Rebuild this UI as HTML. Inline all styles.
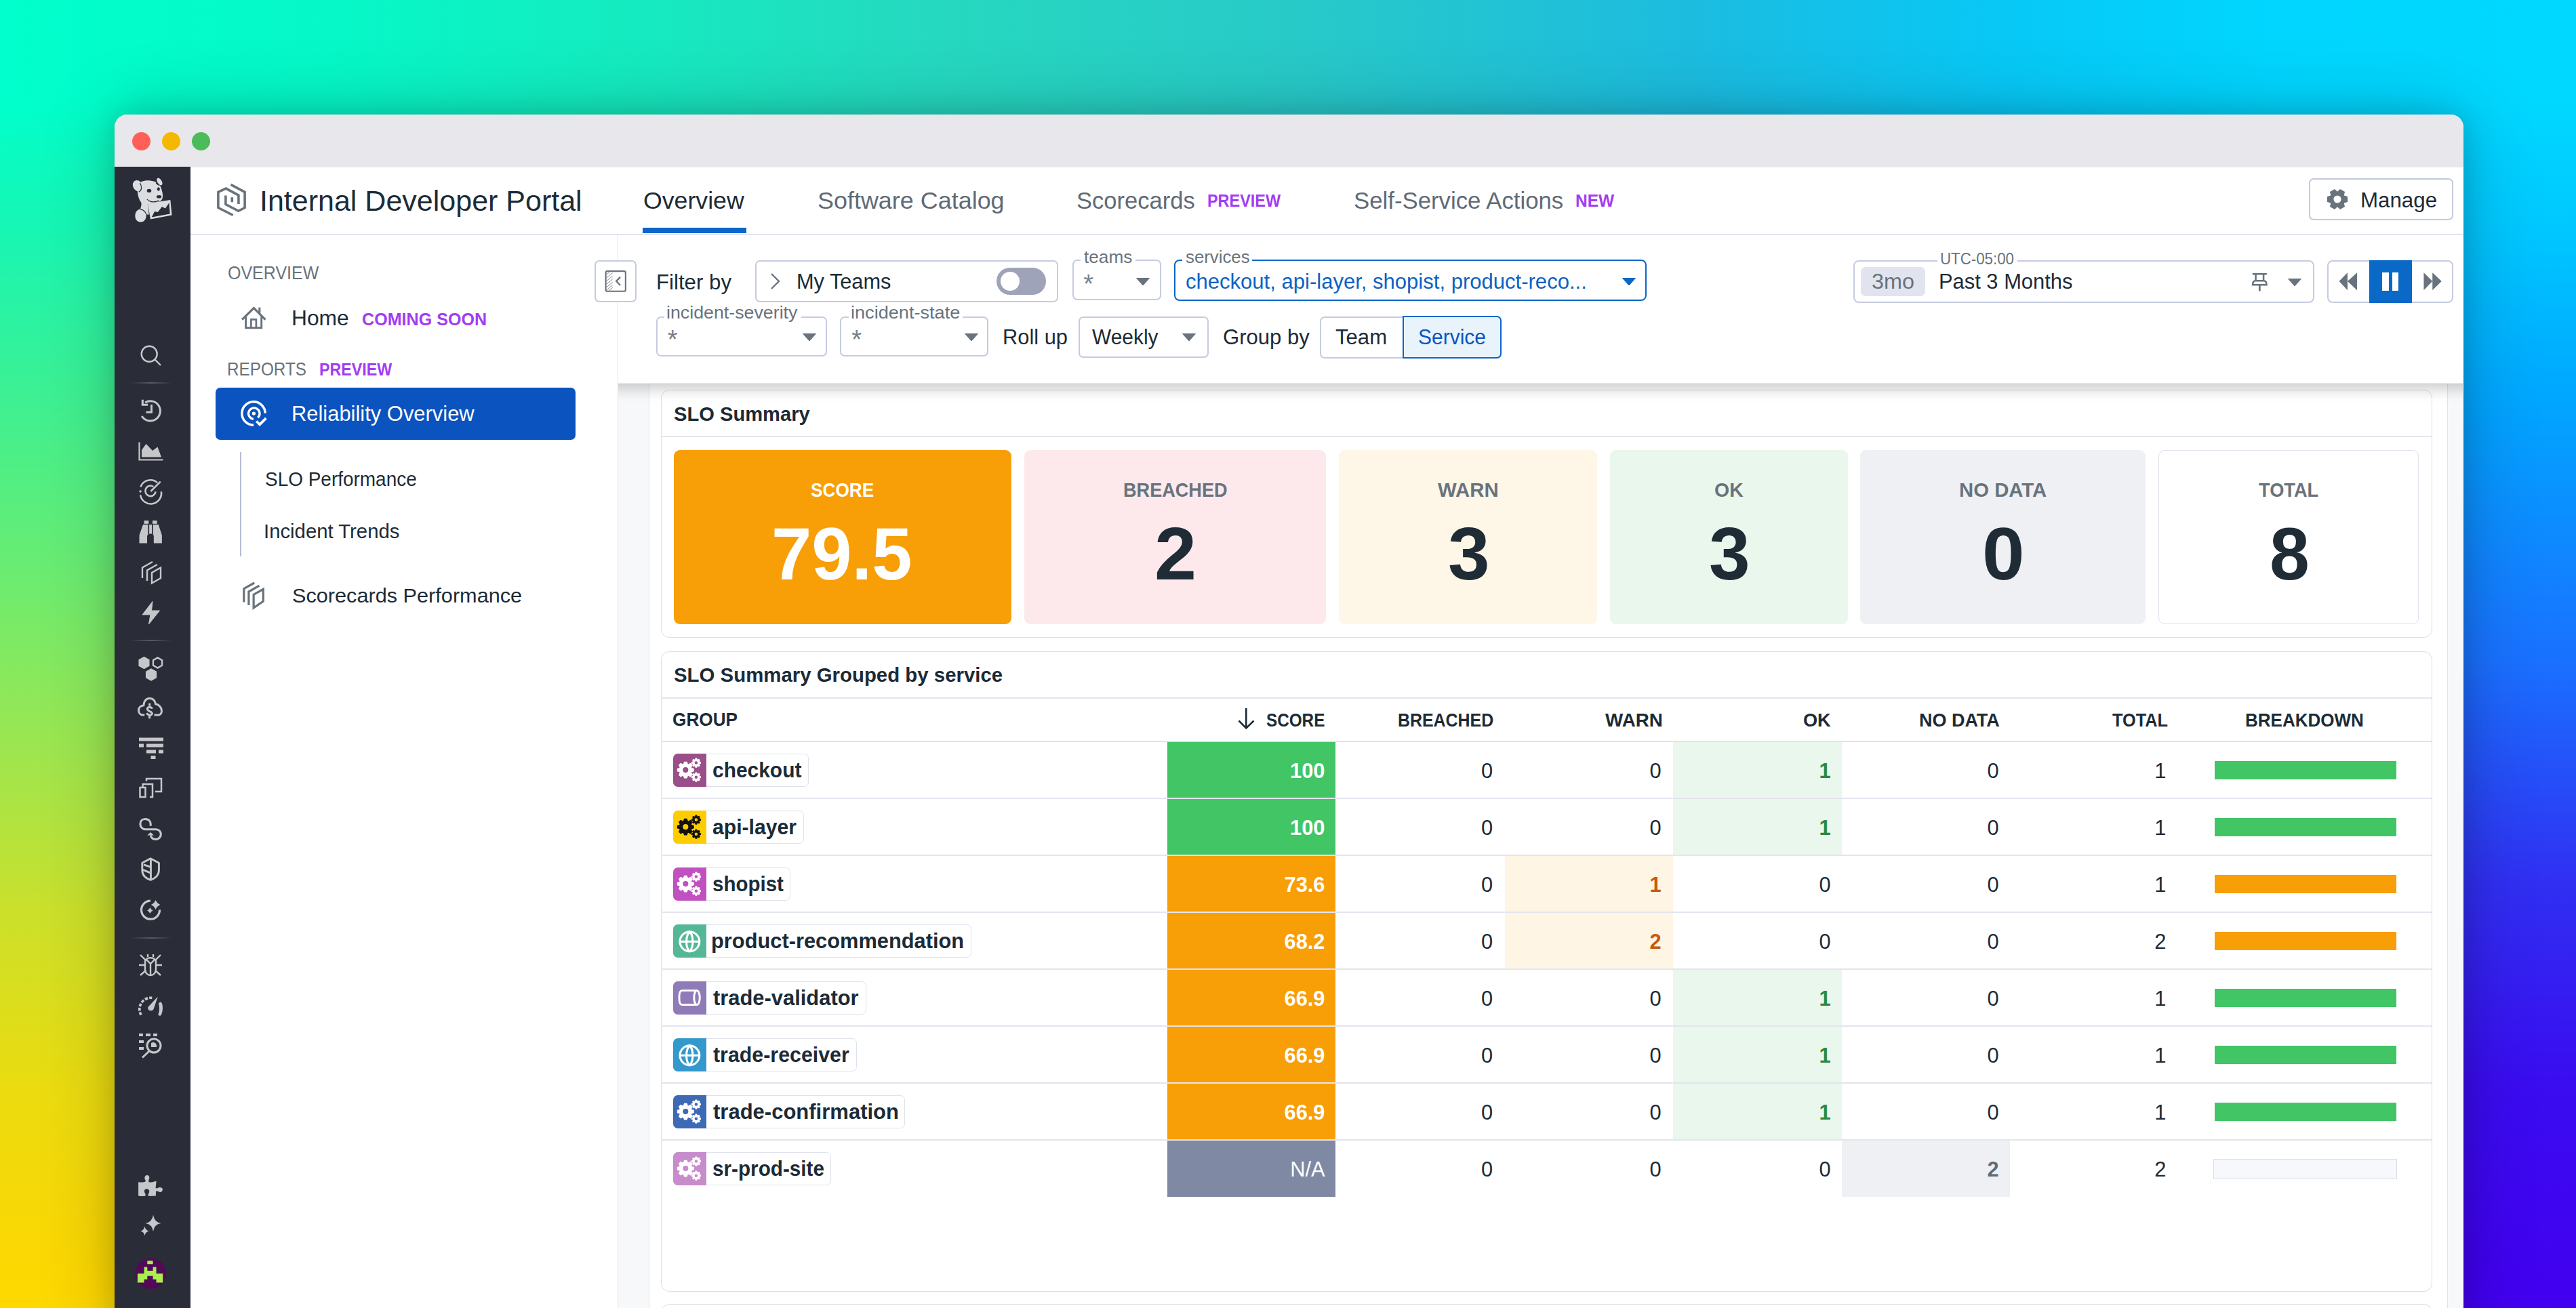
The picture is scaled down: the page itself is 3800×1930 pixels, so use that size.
<!DOCTYPE html>
<html><head><meta charset="utf-8"><style>
html,body{margin:0;padding:0;width:3800px;height:1930px;overflow:hidden;position:relative}
body{background:linear-gradient(90deg,#00ffcc 0px,#06f8c8 500px,#14ecc0 900px,#26d8c0 1400px,#28cac8 1900px,#1cbce0 2500px,#08c8f6 2950px,#00d6ff 3350px,#00d8ff 3800px);font-family:"Liberation Sans",sans-serif}
.b{position:absolute}
.t{position:absolute;white-space:pre;line-height:1;transform-origin:0 0;z-index:5}
.tr{position:absolute;white-space:pre;line-height:1;z-index:5}
</style></head><body>
<div class="b" style="left:0;top:0;width:175px;height:1930px;background:linear-gradient(180deg,rgba(6,250,196,0) 150px,#16f6b4 330px,#40f090 600px,#6cec70 850px,#9ce650 1100px,#cce02a 1350px,#eadc10 1600px,#f8d806 1800px,#ffd800 1930px)"></div>
<div class="b" style="left:3625px;top:0;width:175px;height:1930px;background:linear-gradient(180deg,rgba(0,216,255,0) 150px,#00c8ff 330px,#00a8ff 574px,#1a70ff 978px,#3030f2 1300px,#3a0cf0 1600px,#4200f0 1930px)"></div>
<div class="b" style="left:168.5px;top:168.5px;width:3465px;height:1800px;border-radius:19px 19px 0 0;background:#fff;box-shadow:0 0 110px rgba(0,0,0,0.22),0 0 40px rgba(0,0,0,0.14);overflow:hidden"><div class="b" style="left:0;top:0;width:3465px;height:78px;background:#e8e8ec"></div></div>
<div class="b" style="left:194.5px;top:194.5px;width:27px;height:27px;border-radius:50%;background:#ff5f57"></div>
<div class="b" style="left:238.5px;top:194.5px;width:27px;height:27px;border-radius:50%;background:#f5b800"></div>
<div class="b" style="left:282.5px;top:194.5px;width:27px;height:27px;border-radius:50%;background:#4cbb5a"></div>
<div class="b" style="left:168.5px;top:246px;width:112.5px;height:1684px;background:#2a2d38"></div>
<div class="b" style="left:192px;top:564.4px;width:62px;height:1.7999999999999545px;background:linear-gradient(90deg,rgba(90,92,98,0),rgba(95,96,100,0.9),rgba(90,92,98,0))"></div>
<div class="b" style="left:192px;top:943.9px;width:62px;height:1.7999999999999545px;background:linear-gradient(90deg,rgba(90,92,98,0),rgba(95,96,100,0.9),rgba(90,92,98,0))"></div>
<div class="b" style="left:192px;top:1382.8px;width:62px;height:1.800000000000182px;background:linear-gradient(90deg,rgba(90,92,98,0),rgba(95,96,100,0.9),rgba(90,92,98,0))"></div>
<div class="b" style="left:281px;top:345px;width:3352px;height:2px;background:#e1e4ee"></div>
<div class="b" style="left:910.5px;top:346px;width:1.2999999999999545px;height:1584px;background:#e1e4ee"></div>
<div class="b" style="left:911.8px;top:566px;width:2722.2px;height:1364px;background:#f7f8fa"></div>
<div class="b" style="left:957px;top:566px;width:2654px;height:1364px;background:#fff;border-left:1.4px solid #e2e3e6;border-right:1.4px solid #e2e3e6;box-sizing:border-box"></div>
<div class="b" style="left:911.8px;top:347px;width:2721.2px;height:218px;background:#fff;z-index:2"></div>
<div class="b" style="left:911.8px;top:565px;width:2721.2px;height:2px;background:#dfe3ee;z-index:7"></div>
<div class="b" style="left:911.8px;top:567px;width:2721.2px;height:27px;background:linear-gradient(180deg,rgba(0,0,0,0.16),rgba(0,0,0,0.10) 25%,rgba(0,0,0,0.045) 55%,rgba(0,0,0,0.012) 80%,rgba(0,0,0,0));z-index:7"></div>
<div class="b" style="left:317.5px;top:571.75px;width:531.25px;height:76.75px;background:#0b53bf;border-radius:7px"></div>
<div class="b" style="left:354.3px;top:667px;width:2.0px;height:154px;background:#b7bdd3"></div>
<div class="b" style="left:948px;top:335.5px;width:152.5px;height:8.5px;background:#0a66c8"></div>
<div class="b" style="left:3406px;top:263.3px;width:212.5px;height:62.19999999999999px;border:2px solid #c3c9de;border-radius:7px;box-sizing:border-box"></div>
<div class="b" style="left:876.75px;top:384.25px;width:62.0px;height:61.75px;border:2.1px solid #c6cbe0;border-radius:7px;box-sizing:border-box;background:#fff;z-index:3"></div>
<div class="b" style="left:1113.75px;top:384.25px;width:447.5px;height:61.75px;border:2.1px solid #c6cbe0;border-radius:7px;box-sizing:border-box;z-index:3"></div>
<div class="b" style="left:1470px;top:394.75px;width:72.5px;height:40.5px;background:#9ea3b9;border-radius:21px;z-index:3"></div>
<div class="b" style="left:1476px;top:401px;width:28px;height:28px;background:#fff;border-radius:50%;z-index:3"></div>
<div class="b" style="left:1581.5px;top:382.7px;width:131.0px;height:60.80000000000001px;border:2.1px solid #c6cbe0;border-radius:7px;box-sizing:border-box;z-index:3"></div>
<div class="b" style="left:1594px;top:378px;width:81px;height:14px;background:#fff;z-index:3"></div>
<div class="b" style="left:1732px;top:382.7px;width:696.75px;height:61.30000000000001px;border:2.4px solid #0b66c8;border-radius:8px;box-sizing:border-box;z-index:3"></div>
<div class="b" style="left:1744px;top:378px;width:103px;height:14px;background:#fff;z-index:3"></div>
<div class="b" style="left:967.5px;top:466.5px;width:252.0px;height:59.0px;border:2.1px solid #c6cbe0;border-radius:7px;box-sizing:border-box;z-index:3"></div>
<div class="b" style="left:980px;top:460px;width:202px;height:14px;background:#fff;z-index:3"></div>
<div class="b" style="left:1239.25px;top:466.5px;width:218.75px;height:59.0px;border:2.1px solid #c6cbe0;border-radius:7px;box-sizing:border-box;z-index:3"></div>
<div class="b" style="left:1252px;top:460px;width:168px;height:14px;background:#fff;z-index:3"></div>
<div class="b" style="left:1590.5px;top:466.5px;width:192.0px;height:61.5px;border:2.1px solid #c6cbe0;border-radius:7px;box-sizing:border-box;z-index:3"></div>
<div class="b" style="left:1946.75px;top:466.5px;width:268.25px;height:62.0px;border:2.1px solid #c6cbe0;border-radius:7px;box-sizing:border-box;z-index:3"></div>
<div class="b" style="left:2068.75px;top:466px;width:146.25px;height:62.5px;border:2px solid #0b66c8;border-radius:0 7px 7px 0;box-sizing:border-box;background:#e9f3fc;z-index:3"></div>
<div class="b" style="left:2734.25px;top:384.25px;width:679.5px;height:62.25px;border:2.1px solid #c6cbe0;border-radius:8px;box-sizing:border-box;z-index:3"></div>
<div class="b" style="left:2857.5px;top:376px;width:118.5px;height:16px;background:#fff;z-index:3"></div>
<div class="b" style="left:2745px;top:393.5px;width:95px;height:43.0px;background:#e1e4ef;border-radius:7px;z-index:3"></div>
<div class="b" style="left:3433.2px;top:383.8px;width:185.4000000000001px;height:62.80000000000001px;border:2.1px solid #c6cbe0;border-radius:8px;box-sizing:border-box;z-index:3"></div>
<div class="b" style="left:3494.5px;top:383.8px;width:63.40000000000009px;height:62.80000000000001px;background:#0a68c6;z-index:3"></div>
<div class="b" style="left:3514px;top:401.8px;width:9.5px;height:27.399999999999977px;background:#fff;z-index:3"></div>
<div class="b" style="left:3529px;top:401.8px;width:9.300000000000182px;height:27.399999999999977px;background:#fff;z-index:3"></div>
<div class="b" style="left:975px;top:574.8px;width:2612.5px;height:366.20000000000005px;border:1.6px solid #dcdde2;border-radius:12.5px;box-sizing:border-box;background:#fff"></div>
<div class="b" style="left:976.5px;top:643px;width:2610.0px;height:2px;background:#e3e5ee"></div>
<div class="b" style="left:994.25px;top:663.6px;width:498.0999999999999px;height:257.9px;background:#f89e07;border-radius:9px;"></div>
<div class="b" style="left:1511px;top:663.6px;width:445.4000000000001px;height:257.9px;background:#fde9ec;border-radius:9px;"></div>
<div class="b" style="left:1975px;top:663.6px;width:381.4000000000001px;height:257.9px;background:#fef6e6;border-radius:9px;"></div>
<div class="b" style="left:2374.7px;top:663.6px;width:351.0px;height:257.9px;background:#eaf7ec;border-radius:9px;"></div>
<div class="b" style="left:2744.4px;top:663.6px;width:420.2999999999997px;height:257.9px;background:#eff0f4;border-radius:9px;"></div>
<div class="b" style="left:3183.6px;top:663.6px;width:384.9000000000001px;height:257.9px;background:#fff;border-radius:9px;border:1.6px solid #dfe2ec;box-sizing:border-box;"></div>
<div class="b" style="left:975px;top:960.5px;width:2612.5px;height:945.8px;border:1.6px solid #dcdde2;border-radius:12.5px;box-sizing:border-box;background:#fff"></div>
<div class="b" style="left:976.5px;top:1029px;width:2610.0px;height:2px;background:#e3e5ee"></div>
<div class="b" style="left:976.5px;top:1092.8px;width:2610.0px;height:2.2000000000000455px;background:#dfe2ec"></div>
<div class="b" style="left:975px;top:1924.3px;width:2612.5px;height:75.70000000000005px;border:1.6px solid #dcdde2;border-radius:12.5px;box-sizing:border-box;background:#fff"></div>
<div class="b" style="left:1721.5px;top:1095px;width:248.75px;height:83px;background:#42c565"></div>
<div class="b" style="left:2468px;top:1095px;width:248.75px;height:83px;background:#e9f7ec"></div>
<div class="b" style="left:3266.5px;top:1123px;width:268.0px;height:27px;background:#42c565"></div>
<div class="b" style="left:976.5px;top:1177px;width:2610.0px;height:2px;background:#e3e5ee"></div>
<div class="b" style="left:992.5px;top:1111.5px;width:200.5px;height:49.0px;border:1.5px solid #dfe2ec;border-radius:7px;box-sizing:border-box;background:#fff"></div>
<div class="b" style="left:992.5px;top:1111.5px;width:49.5px;height:49.0px;background:#9b4f8a;border-radius:7px 0 0 7px"></div>
<svg class="b" style="left:992.5px;top:1111.5px;z-index:6" width="49.5" height="49" viewBox="0 0 49.2 49.6"><path fill-rule="evenodd" fill="#fff" d="M27.04,20.90 L30.71,22.20 L30.71,26.60 L27.04,27.90 L26.90,28.25 L28.57,31.76 L25.46,34.87 L21.95,33.20 L21.60,33.34 L20.30,37.01 L15.90,37.01 L14.60,33.34 L14.25,33.20 L10.74,34.87 L7.63,31.76 L9.30,28.25 L9.16,27.90 L5.49,26.60 L5.49,22.20 L9.16,20.90 L9.30,20.55 L7.63,17.04 L10.74,13.93 L14.25,15.60 L14.60,15.46 L15.90,11.79 L20.30,11.79 L21.60,15.46 L21.95,15.60 L25.46,13.93 L28.57,17.04 L26.90,20.55 Z M22.20,24.40 A4.1,4.1 0 1 0 14.00,24.40 A4.1,4.1 0 1 0 22.20,24.40 Z M38.93,11.73 L41.09,12.44 L41.09,14.96 L38.93,15.67 L38.85,15.86 L39.87,17.90 L38.10,19.67 L36.06,18.65 L35.87,18.73 L35.16,20.89 L32.64,20.89 L31.93,18.73 L31.74,18.65 L29.70,19.67 L27.93,17.90 L28.95,15.86 L28.87,15.67 L26.71,14.96 L26.71,12.44 L28.87,11.73 L28.95,11.54 L27.93,9.50 L29.70,7.73 L31.74,8.75 L31.93,8.67 L32.64,6.51 L35.16,6.51 L35.87,8.67 L36.06,8.75 L38.10,7.73 L39.87,9.50 L38.85,11.54 Z M36.20,13.70 A2.3,2.3 0 1 0 31.60,13.70 A2.3,2.3 0 1 0 36.20,13.70 Z M38.93,33.13 L41.09,33.84 L41.09,36.36 L38.93,37.07 L38.85,37.26 L39.87,39.30 L38.10,41.07 L36.06,40.05 L35.87,40.13 L35.16,42.29 L32.64,42.29 L31.93,40.13 L31.74,40.05 L29.70,41.07 L27.93,39.30 L28.95,37.26 L28.87,37.07 L26.71,36.36 L26.71,33.84 L28.87,33.13 L28.95,32.94 L27.93,30.90 L29.70,29.13 L31.74,30.15 L31.93,30.07 L32.64,27.91 L35.16,27.91 L35.87,30.07 L36.06,30.15 L38.10,29.13 L39.87,30.90 L38.85,32.94 Z M36.20,35.10 A2.3,2.3 0 1 0 31.60,35.10 A2.3,2.3 0 1 0 36.20,35.10 Z"/></svg>
<div class="b" style="left:1721.5px;top:1179px;width:248.75px;height:83px;background:#42c565"></div>
<div class="b" style="left:2468px;top:1179px;width:248.75px;height:83px;background:#e9f7ec"></div>
<div class="b" style="left:3266.5px;top:1207px;width:268.0px;height:27px;background:#42c565"></div>
<div class="b" style="left:976.5px;top:1261px;width:2610.0px;height:2px;background:#e3e5ee"></div>
<div class="b" style="left:992.5px;top:1195.5px;width:193.5px;height:49.0px;border:1.5px solid #dfe2ec;border-radius:7px;box-sizing:border-box;background:#fff"></div>
<div class="b" style="left:992.5px;top:1195.5px;width:49.5px;height:49.0px;background:#ffcc00;border-radius:7px 0 0 7px"></div>
<svg class="b" style="left:992.5px;top:1195.5px;z-index:6" width="49.5" height="49" viewBox="0 0 49.2 49.6"><path fill-rule="evenodd" fill="#111" d="M27.04,20.90 L30.71,22.20 L30.71,26.60 L27.04,27.90 L26.90,28.25 L28.57,31.76 L25.46,34.87 L21.95,33.20 L21.60,33.34 L20.30,37.01 L15.90,37.01 L14.60,33.34 L14.25,33.20 L10.74,34.87 L7.63,31.76 L9.30,28.25 L9.16,27.90 L5.49,26.60 L5.49,22.20 L9.16,20.90 L9.30,20.55 L7.63,17.04 L10.74,13.93 L14.25,15.60 L14.60,15.46 L15.90,11.79 L20.30,11.79 L21.60,15.46 L21.95,15.60 L25.46,13.93 L28.57,17.04 L26.90,20.55 Z M22.20,24.40 A4.1,4.1 0 1 0 14.00,24.40 A4.1,4.1 0 1 0 22.20,24.40 Z M38.93,11.73 L41.09,12.44 L41.09,14.96 L38.93,15.67 L38.85,15.86 L39.87,17.90 L38.10,19.67 L36.06,18.65 L35.87,18.73 L35.16,20.89 L32.64,20.89 L31.93,18.73 L31.74,18.65 L29.70,19.67 L27.93,17.90 L28.95,15.86 L28.87,15.67 L26.71,14.96 L26.71,12.44 L28.87,11.73 L28.95,11.54 L27.93,9.50 L29.70,7.73 L31.74,8.75 L31.93,8.67 L32.64,6.51 L35.16,6.51 L35.87,8.67 L36.06,8.75 L38.10,7.73 L39.87,9.50 L38.85,11.54 Z M36.20,13.70 A2.3,2.3 0 1 0 31.60,13.70 A2.3,2.3 0 1 0 36.20,13.70 Z M38.93,33.13 L41.09,33.84 L41.09,36.36 L38.93,37.07 L38.85,37.26 L39.87,39.30 L38.10,41.07 L36.06,40.05 L35.87,40.13 L35.16,42.29 L32.64,42.29 L31.93,40.13 L31.74,40.05 L29.70,41.07 L27.93,39.30 L28.95,37.26 L28.87,37.07 L26.71,36.36 L26.71,33.84 L28.87,33.13 L28.95,32.94 L27.93,30.90 L29.70,29.13 L31.74,30.15 L31.93,30.07 L32.64,27.91 L35.16,27.91 L35.87,30.07 L36.06,30.15 L38.10,29.13 L39.87,30.90 L38.85,32.94 Z M36.20,35.10 A2.3,2.3 0 1 0 31.60,35.10 A2.3,2.3 0 1 0 36.20,35.10 Z"/></svg>
<div class="b" style="left:1721.5px;top:1263px;width:248.75px;height:83px;background:#f89e07"></div>
<div class="b" style="left:2219.5px;top:1263px;width:248.5px;height:83px;background:#fef5e4"></div>
<div class="b" style="left:3266.5px;top:1291px;width:268.0px;height:27px;background:#f89e07"></div>
<div class="b" style="left:976.5px;top:1345px;width:2610.0px;height:2px;background:#e3e5ee"></div>
<div class="b" style="left:992.5px;top:1279.5px;width:173.0px;height:49.0px;border:1.5px solid #dfe2ec;border-radius:7px;box-sizing:border-box;background:#fff"></div>
<div class="b" style="left:992.5px;top:1279.5px;width:49.5px;height:49.0px;background:#c150c0;border-radius:7px 0 0 7px"></div>
<svg class="b" style="left:992.5px;top:1279.5px;z-index:6" width="49.5" height="49" viewBox="0 0 49.2 49.6"><path fill-rule="evenodd" fill="#fff" d="M27.04,20.90 L30.71,22.20 L30.71,26.60 L27.04,27.90 L26.90,28.25 L28.57,31.76 L25.46,34.87 L21.95,33.20 L21.60,33.34 L20.30,37.01 L15.90,37.01 L14.60,33.34 L14.25,33.20 L10.74,34.87 L7.63,31.76 L9.30,28.25 L9.16,27.90 L5.49,26.60 L5.49,22.20 L9.16,20.90 L9.30,20.55 L7.63,17.04 L10.74,13.93 L14.25,15.60 L14.60,15.46 L15.90,11.79 L20.30,11.79 L21.60,15.46 L21.95,15.60 L25.46,13.93 L28.57,17.04 L26.90,20.55 Z M22.20,24.40 A4.1,4.1 0 1 0 14.00,24.40 A4.1,4.1 0 1 0 22.20,24.40 Z M38.93,11.73 L41.09,12.44 L41.09,14.96 L38.93,15.67 L38.85,15.86 L39.87,17.90 L38.10,19.67 L36.06,18.65 L35.87,18.73 L35.16,20.89 L32.64,20.89 L31.93,18.73 L31.74,18.65 L29.70,19.67 L27.93,17.90 L28.95,15.86 L28.87,15.67 L26.71,14.96 L26.71,12.44 L28.87,11.73 L28.95,11.54 L27.93,9.50 L29.70,7.73 L31.74,8.75 L31.93,8.67 L32.64,6.51 L35.16,6.51 L35.87,8.67 L36.06,8.75 L38.10,7.73 L39.87,9.50 L38.85,11.54 Z M36.20,13.70 A2.3,2.3 0 1 0 31.60,13.70 A2.3,2.3 0 1 0 36.20,13.70 Z M38.93,33.13 L41.09,33.84 L41.09,36.36 L38.93,37.07 L38.85,37.26 L39.87,39.30 L38.10,41.07 L36.06,40.05 L35.87,40.13 L35.16,42.29 L32.64,42.29 L31.93,40.13 L31.74,40.05 L29.70,41.07 L27.93,39.30 L28.95,37.26 L28.87,37.07 L26.71,36.36 L26.71,33.84 L28.87,33.13 L28.95,32.94 L27.93,30.90 L29.70,29.13 L31.74,30.15 L31.93,30.07 L32.64,27.91 L35.16,27.91 L35.87,30.07 L36.06,30.15 L38.10,29.13 L39.87,30.90 L38.85,32.94 Z M36.20,35.10 A2.3,2.3 0 1 0 31.60,35.10 A2.3,2.3 0 1 0 36.20,35.10 Z"/></svg>
<div class="b" style="left:1721.5px;top:1347px;width:248.75px;height:83px;background:#f89e07"></div>
<div class="b" style="left:2219.5px;top:1347px;width:248.5px;height:83px;background:#fef5e4"></div>
<div class="b" style="left:3266.5px;top:1375px;width:268.0px;height:27px;background:#f89e07"></div>
<div class="b" style="left:976.5px;top:1429px;width:2610.0px;height:2px;background:#e3e5ee"></div>
<div class="b" style="left:992.5px;top:1363.5px;width:440.0px;height:49.0px;border:1.5px solid #dfe2ec;border-radius:7px;box-sizing:border-box;background:#fff"></div>
<div class="b" style="left:992.5px;top:1363.5px;width:49.5px;height:49.0px;background:#56b796;border-radius:7px 0 0 7px"></div>
<svg class="b" style="left:992.5px;top:1363.5px;z-index:6" width="49.5" height="49" viewBox="0 0 49.2 49.6"><g fill="none" stroke="#fff" stroke-width="3.1"><circle cx="24.2" cy="25.6" r="14.6"/><path d="M9.6,25.6 L38.8,25.6"/><path d="M24.2,11 C18,17 17.5,34 24.2,40.2 C30.4,34 30.4,17 24.2,11 Z"/></g></svg>
<div class="b" style="left:1721.5px;top:1431px;width:248.75px;height:83px;background:#f89e07"></div>
<div class="b" style="left:2468px;top:1431px;width:248.75px;height:83px;background:#e9f7ec"></div>
<div class="b" style="left:3266.5px;top:1459px;width:268.0px;height:27px;background:#42c565"></div>
<div class="b" style="left:976.5px;top:1513px;width:2610.0px;height:2px;background:#e3e5ee"></div>
<div class="b" style="left:992.5px;top:1447.5px;width:285.0px;height:49.0px;border:1.5px solid #dfe2ec;border-radius:7px;box-sizing:border-box;background:#fff"></div>
<div class="b" style="left:992.5px;top:1447.5px;width:49.5px;height:49.0px;background:#8f7bb8;border-radius:7px 0 0 7px"></div>
<svg class="b" style="left:992.5px;top:1447.5px;z-index:6" width="49.5" height="49" viewBox="0 0 49.2 49.6"><g fill="none" stroke="#fff" stroke-width="3"><path d="M35,13.8 L12.5,13.8 C9.5,13.8 8.6,19 8.6,24.5 C8.6,30 9.5,35 12.5,35 L35,35"/><ellipse cx="35" cy="24.4" rx="4.3" ry="10.6"/></g></svg>
<div class="b" style="left:1721.5px;top:1515px;width:248.75px;height:83px;background:#f89e07"></div>
<div class="b" style="left:2468px;top:1515px;width:248.75px;height:83px;background:#e9f7ec"></div>
<div class="b" style="left:3266.5px;top:1543px;width:268.0px;height:27px;background:#42c565"></div>
<div class="b" style="left:976.5px;top:1597px;width:2610.0px;height:2px;background:#e3e5ee"></div>
<div class="b" style="left:992.5px;top:1531.5px;width:271.25px;height:49.0px;border:1.5px solid #dfe2ec;border-radius:7px;box-sizing:border-box;background:#fff"></div>
<div class="b" style="left:992.5px;top:1531.5px;width:49.5px;height:49.0px;background:#3399cc;border-radius:7px 0 0 7px"></div>
<svg class="b" style="left:992.5px;top:1531.5px;z-index:6" width="49.5" height="49" viewBox="0 0 49.2 49.6"><g fill="none" stroke="#fff" stroke-width="3.1"><circle cx="24.2" cy="25.6" r="14.6"/><path d="M9.6,25.6 L38.8,25.6"/><path d="M24.2,11 C18,17 17.5,34 24.2,40.2 C30.4,34 30.4,17 24.2,11 Z"/></g></svg>
<div class="b" style="left:1721.5px;top:1599px;width:248.75px;height:83px;background:#f89e07"></div>
<div class="b" style="left:2468px;top:1599px;width:248.75px;height:83px;background:#e9f7ec"></div>
<div class="b" style="left:3266.5px;top:1627px;width:268.0px;height:27px;background:#42c565"></div>
<div class="b" style="left:976.5px;top:1681px;width:2610.0px;height:2px;background:#e3e5ee"></div>
<div class="b" style="left:992.5px;top:1615.5px;width:342.5px;height:49.0px;border:1.5px solid #dfe2ec;border-radius:7px;box-sizing:border-box;background:#fff"></div>
<div class="b" style="left:992.5px;top:1615.5px;width:49.5px;height:49.0px;background:#3d69b5;border-radius:7px 0 0 7px"></div>
<svg class="b" style="left:992.5px;top:1615.5px;z-index:6" width="49.5" height="49" viewBox="0 0 49.2 49.6"><path fill-rule="evenodd" fill="#fff" d="M27.04,20.90 L30.71,22.20 L30.71,26.60 L27.04,27.90 L26.90,28.25 L28.57,31.76 L25.46,34.87 L21.95,33.20 L21.60,33.34 L20.30,37.01 L15.90,37.01 L14.60,33.34 L14.25,33.20 L10.74,34.87 L7.63,31.76 L9.30,28.25 L9.16,27.90 L5.49,26.60 L5.49,22.20 L9.16,20.90 L9.30,20.55 L7.63,17.04 L10.74,13.93 L14.25,15.60 L14.60,15.46 L15.90,11.79 L20.30,11.79 L21.60,15.46 L21.95,15.60 L25.46,13.93 L28.57,17.04 L26.90,20.55 Z M22.20,24.40 A4.1,4.1 0 1 0 14.00,24.40 A4.1,4.1 0 1 0 22.20,24.40 Z M38.93,11.73 L41.09,12.44 L41.09,14.96 L38.93,15.67 L38.85,15.86 L39.87,17.90 L38.10,19.67 L36.06,18.65 L35.87,18.73 L35.16,20.89 L32.64,20.89 L31.93,18.73 L31.74,18.65 L29.70,19.67 L27.93,17.90 L28.95,15.86 L28.87,15.67 L26.71,14.96 L26.71,12.44 L28.87,11.73 L28.95,11.54 L27.93,9.50 L29.70,7.73 L31.74,8.75 L31.93,8.67 L32.64,6.51 L35.16,6.51 L35.87,8.67 L36.06,8.75 L38.10,7.73 L39.87,9.50 L38.85,11.54 Z M36.20,13.70 A2.3,2.3 0 1 0 31.60,13.70 A2.3,2.3 0 1 0 36.20,13.70 Z M38.93,33.13 L41.09,33.84 L41.09,36.36 L38.93,37.07 L38.85,37.26 L39.87,39.30 L38.10,41.07 L36.06,40.05 L35.87,40.13 L35.16,42.29 L32.64,42.29 L31.93,40.13 L31.74,40.05 L29.70,41.07 L27.93,39.30 L28.95,37.26 L28.87,37.07 L26.71,36.36 L26.71,33.84 L28.87,33.13 L28.95,32.94 L27.93,30.90 L29.70,29.13 L31.74,30.15 L31.93,30.07 L32.64,27.91 L35.16,27.91 L35.87,30.07 L36.06,30.15 L38.10,29.13 L39.87,30.90 L38.85,32.94 Z M36.20,35.10 A2.3,2.3 0 1 0 31.60,35.10 A2.3,2.3 0 1 0 36.20,35.10 Z"/></svg>
<div class="b" style="left:1721.5px;top:1683px;width:248.75px;height:83px;background:#8089a4"></div>
<div class="b" style="left:2717px;top:1683px;width:247.5px;height:83px;background:#eff0f4"></div>
<div class="b" style="left:3265px;top:1710px;width:271px;height:30px;background:#f7f8fc;border:1.5px solid #d8dbe8;box-sizing:border-box"></div>
<div class="b" style="left:992.5px;top:1699.5px;width:233.75px;height:49.0px;border:1.5px solid #dfe2ec;border-radius:7px;box-sizing:border-box;background:#fff"></div>
<div class="b" style="left:992.5px;top:1699.5px;width:49.5px;height:49.0px;background:#c78ccc;border-radius:7px 0 0 7px"></div>
<svg class="b" style="left:992.5px;top:1699.5px;z-index:6" width="49.5" height="49" viewBox="0 0 49.2 49.6"><path fill-rule="evenodd" fill="#fff" d="M27.04,20.90 L30.71,22.20 L30.71,26.60 L27.04,27.90 L26.90,28.25 L28.57,31.76 L25.46,34.87 L21.95,33.20 L21.60,33.34 L20.30,37.01 L15.90,37.01 L14.60,33.34 L14.25,33.20 L10.74,34.87 L7.63,31.76 L9.30,28.25 L9.16,27.90 L5.49,26.60 L5.49,22.20 L9.16,20.90 L9.30,20.55 L7.63,17.04 L10.74,13.93 L14.25,15.60 L14.60,15.46 L15.90,11.79 L20.30,11.79 L21.60,15.46 L21.95,15.60 L25.46,13.93 L28.57,17.04 L26.90,20.55 Z M22.20,24.40 A4.1,4.1 0 1 0 14.00,24.40 A4.1,4.1 0 1 0 22.20,24.40 Z M38.93,11.73 L41.09,12.44 L41.09,14.96 L38.93,15.67 L38.85,15.86 L39.87,17.90 L38.10,19.67 L36.06,18.65 L35.87,18.73 L35.16,20.89 L32.64,20.89 L31.93,18.73 L31.74,18.65 L29.70,19.67 L27.93,17.90 L28.95,15.86 L28.87,15.67 L26.71,14.96 L26.71,12.44 L28.87,11.73 L28.95,11.54 L27.93,9.50 L29.70,7.73 L31.74,8.75 L31.93,8.67 L32.64,6.51 L35.16,6.51 L35.87,8.67 L36.06,8.75 L38.10,7.73 L39.87,9.50 L38.85,11.54 Z M36.20,13.70 A2.3,2.3 0 1 0 31.60,13.70 A2.3,2.3 0 1 0 36.20,13.70 Z M38.93,33.13 L41.09,33.84 L41.09,36.36 L38.93,37.07 L38.85,37.26 L39.87,39.30 L38.10,41.07 L36.06,40.05 L35.87,40.13 L35.16,42.29 L32.64,42.29 L31.93,40.13 L31.74,40.05 L29.70,41.07 L27.93,39.30 L28.95,37.26 L28.87,37.07 L26.71,36.36 L26.71,33.84 L28.87,33.13 L28.95,32.94 L27.93,30.90 L29.70,29.13 L31.74,30.15 L31.93,30.07 L32.64,27.91 L35.16,27.91 L35.87,30.07 L36.06,30.15 L38.10,29.13 L39.87,30.90 L38.85,32.94 Z M36.20,35.10 A2.3,2.3 0 1 0 31.60,35.10 A2.3,2.3 0 1 0 36.20,35.10 Z"/></svg>
<svg class="b" style="left:1183.75px;top:492px;z-index:4" width="20" height="11.5" viewBox="0 0 20 11.5"><path d="M0.5 0.5 L19.5 0.5 L10 11 Z" fill="#68737d" stroke="#68737d" stroke-linejoin="round"/></svg>
<svg class="b" style="left:1422.5px;top:492px;z-index:4" width="20" height="11.5" viewBox="0 0 20 11.5"><path d="M0.5 0.5 L19.5 0.5 L10 11 Z" fill="#68737d" stroke="#68737d" stroke-linejoin="round"/></svg>
<svg class="b" style="left:1676.0px;top:409.75px;z-index:4" width="20" height="11.5" viewBox="0 0 20 11.5"><path d="M0.5 0.5 L19.5 0.5 L10 11 Z" fill="#68737d" stroke="#68737d" stroke-linejoin="round"/></svg>
<svg class="b" style="left:2392.5px;top:409.75px;z-index:4" width="20" height="11.5" viewBox="0 0 20 11.5"><path d="M0.5 0.5 L19.5 0.5 L10 11 Z" fill="#0b66c8" stroke="#0b66c8" stroke-linejoin="round"/></svg>
<svg class="b" style="left:1743.75px;top:492px;z-index:4" width="20" height="11.5" viewBox="0 0 20 11.5"><path d="M0.5 0.5 L19.5 0.5 L10 11 Z" fill="#68737d" stroke="#68737d" stroke-linejoin="round"/></svg>
<svg class="b" style="left:3375.0px;top:410.7px;z-index:4" width="20" height="11.5" viewBox="0 0 20 11.5"><path d="M0.5 0.5 L19.5 0.5 L10 11 Z" fill="#68737d" stroke="#68737d" stroke-linejoin="round"/></svg>
<span class="t" style="left:984.7px;top:481.8px;font-size:38px;line-height:1;color:#76818a">*</span>
<span class="t" style="left:1256.2px;top:481.8px;font-size:38px;line-height:1;color:#76818a">*</span>
<span class="t" style="left:1598.2px;top:399.6px;font-size:38px;line-height:1;color:#76818a">*</span>
<svg class="b" style="left:315px;top:265px;z-index:6" width="55" height="60" viewBox="0 0 1199 1308" preserveAspectRatio="none"><g fill="none" stroke="#68737d" stroke-width="78" stroke-linejoin="miter"><path d="M625,1145 L150,905 L150,400 L400,285 L805,505 L805,785"/><path d="M555,160 L1005,400 L1005,905 L800,1010 L390,795 L390,515"/><path d="M595,570 L595,725"/></g></svg>
<svg class="b" style="left:345px;top:445px;z-index:6" width="60" height="50" viewBox="0 0 1570 1308" preserveAspectRatio="none"><g fill="none" stroke="#68737d" stroke-linecap="butt"><path d="M315,695 L770,250 L1215,695" stroke-width="82"/><path d="M990,225 L990,445" stroke-width="80"/><path d="M460,585 L460,1015 L1065,1015 L1065,585" stroke-width="76"/><path d="M665,1015 L665,690 L860,690 L860,1015" stroke-width="70"/></g></svg>
<svg class="b" style="left:345px;top:580px;z-index:6" width="60" height="60" viewBox="0 0 1308 1308" preserveAspectRatio="none"><g fill="none" stroke="#fff"><path d="M635,1030 A375,375 0 1 1 1008,650" stroke-width="76"/><path d="M630,835 A180,180 0 1 1 770,790" stroke-width="72"/><circle cx="640" cy="655" r="58" fill="#fff" stroke="none"/><path d="M725,905 L830,1010 L1035,810" stroke-width="82"/></g></svg>
<svg class="b" style="left:345px;top:848px;z-index:6" width="60" height="60" viewBox="0 0 1308 1308" preserveAspectRatio="none"><g fill="none" stroke="#68737d" stroke-width="70"><path d="M322,885 L322,450 L658,262"/><path d="M478,980 L478,545 L818,352"/><path d="M635,1065 L635,642 L945,465 L945,855 Z"/></g></svg>
<svg class="b" style="left:885px;top:390px;z-index:6" width="45" height="50" viewBox="0 0 1177 1308" preserveAspectRatio="none"><g fill="none" stroke="#68737d"><rect x="225" y="265" width="765" height="775" rx="62" stroke-width="56"/><path d="M260,390 L370,300 M260,520 L490,330 M260,640 L490,450 M260,760 L490,570 M260,880 L490,690 M260,990 L490,800 M350,1010 L490,900" stroke-width="22"/><path d="M785,495 L632,650 L785,810" stroke-width="62"/></g></svg>
<svg class="b" style="left:1134px;top:401px;z-index:6" width="20" height="28" viewBox="0 0 20 28"><path d="M4,3 L15,14 L4,25" fill="none" stroke="#68737d" stroke-width="2.4"/></svg>
<svg class="b" style="left:3430px;top:276px;z-index:6" width="36" height="36" viewBox="-18 -18 36 36"><path fill-rule="evenodd" fill="#68737d" d="M10.11,-5.49 L15.08,-4.01 L15.08,4.01 L10.11,5.49 L9.81,6.01 L11.01,11.05 L4.07,15.06 L0.30,11.50 L-0.30,11.50 L-4.07,15.06 L-11.01,11.05 L-9.81,6.01 L-10.11,5.49 L-15.08,4.01 L-15.08,-4.01 L-10.11,-5.49 L-9.81,-6.01 L-11.01,-11.05 L-4.07,-15.06 L-0.30,-11.50 L0.30,-11.50 L4.07,-15.06 L11.01,-11.05 L9.81,-6.01 Z M5.60,0.00 A5.6,5.6 0 1 0 -5.60,0.00 A5.6,5.6 0 1 0 5.60,0.00 Z"/></svg>
<svg class="b" style="left:3300px;top:370px;z-index:6" width="330" height="90" viewBox="0 0 2576 703" preserveAspectRatio="none"><g fill="none" stroke="#68737d" stroke-width="20"><path d="M178,268 L342,268"/><path d="M215,268 L215,345 M305,268 L305,345"/><path d="M180,392 C180,350 200,345 215,345 L305,345 C320,345 340,350 340,392 Z" fill="none"/><path d="M260,392 L260,465" stroke-width="22"/></g><path d="M1175,352 L1272,252 L1272,455 Z M1272,352 L1382,252 L1382,455 Z" fill="#68737d"/><path d="M2150,252 L2250,352 L2150,455 Z M2250,252 L2355,352 L2250,455 Z" fill="#68737d"/></svg>
<svg class="b" style="left:1824px;top:1043px;z-index:6" width="30" height="35" viewBox="0 0 30 35"><path d="M14.3,2 L14.3,31 M3.5,20.5 L14.3,31.5 L25.5,20.5" fill="none" stroke="#1c2b36" stroke-width="2.6"/></svg>
<svg class="b" style="left:190px;top:255px;z-index:6" width="70" height="80" viewBox="0 0 1144 1308" preserveAspectRatio="none"><g fill="#dcdde0"><ellipse cx="212" cy="312" rx="112" ry="138" transform="rotate(-28 212 312)"/><path d="M300,215 C380,185 480,175 560,195 C620,205 650,215 660,240 L760,320 C800,420 830,520 815,600 C805,650 770,680 740,690 L460,745 L485,1010 C450,1010 430,990 420,980 C430,1080 400,1180 290,1190 C190,1190 140,1100 155,1010 C165,930 210,890 280,870 C300,800 310,760 300,720 C250,650 220,560 210,460 C230,330 260,240 300,215 Z"/><ellipse cx="742" cy="212" rx="52" ry="98" transform="rotate(-32 742 212)"/><path d="M458,738 L1002,652 L1038,1022 L522,1122 Z"/></g><g fill="#2a2d38"><path d="M552,1072 L622,932 L700,948 L800,818 L880,858 L972,722 L992,988 Z"/><ellipse cx="490" cy="432" rx="54" ry="42"/><ellipse cx="716" cy="392" rx="34" ry="44"/><ellipse cx="728" cy="576" rx="60" ry="38"/></g><path d="M268,248 C320,320 320,420 240,462 M438,636 C500,700 600,725 728,668 M655,245 L722,302 M272,882 C340,885 390,925 420,992" fill="none" stroke="#2a2d38" stroke-width="20"/></svg>
<svg class="b" style="left:200.5px;top:501.6px;z-index:6" width="44" height="44" viewBox="-22 -22 44 44"><g fill="none" stroke="#c5c7ca" stroke-width="2.4"><circle cx="-2.8" cy="-1.8" r="11.5"/><path d="M5.5,6.5 L14,15"/></g></svg>
<svg class="b" style="left:200px;top:583px;z-index:6" width="45" height="45" viewBox="0 0 1308 1308" preserveAspectRatio="none"><path d="M410,318 A425,425 0 1 1 268,898" fill="none" stroke="#c5c7ca" stroke-width="86"/><path d="M255,195 H345 V370 H525 V455 H255 Z M640,410 H725 V780 H450 V690 H640 Z" fill="#c5c7ca"/></svg>
<svg class="b" style="left:200.5px;top:644.0px;z-index:6" width="44" height="44" viewBox="-22 -22 44 44"><path d="M-17.5,-13.5 L-17.5,12.5 L17.5,12.5" fill="none" stroke="#c5c7ca" stroke-width="2.2"/><path d="M-14,8.5 L-14,-2 L-7.5,-11 L2,-1 L9.5,-6.5 L15,8.5 Z" fill="#c5c7ca"/></svg>
<svg class="b" style="left:200px;top:702px;z-index:6" width="45" height="45" viewBox="0 0 1308 1308" preserveAspectRatio="none"><g fill="none" stroke="#c5c7ca" stroke-width="76"><path d="M215,478 A445,445 0 0 1 935,300"/><path d="M1100,680 A445,445 0 0 1 205,825"/><path d="M858,680 A222,222 0 1 1 762,468"/><path d="M648,668 L1068,252"/></g><circle cx="205" cy="670" r="52" fill="#c5c7ca"/></svg>
<svg class="b" style="left:200px;top:762px;z-index:6" width="45" height="45" viewBox="0 0 1308 1308" preserveAspectRatio="none"><g fill="#c5c7ca"><rect x="365" y="180" width="195" height="135"/><rect x="725" y="180" width="195" height="135"/><path d="M320,350 L535,350 L535,790 L495,820 L495,1150 L160,1150 L160,810 Z"/><rect x="585" y="350" width="115" height="395"/><path d="M750,350 L980,350 L1130,810 L1130,1150 L780,1150 L780,820 L750,790 Z"/></g></svg>
<svg class="b" style="left:200.5px;top:822.0px;z-index:6" width="44" height="44" viewBox="-22 -22 44 44"><g fill="none" stroke="#c5c7ca" stroke-width="2.4"><path d="M-13,9 L-13,-6.5 L2,-15"/><path d="M-6,13 L-6,-2.5 L9,-11"/><path d="M1,16.5 L1,1 L14,-6.5 L14,9 Z"/></g></svg>
<svg class="b" style="left:200.5px;top:881.5px;z-index:6" width="44" height="44" viewBox="-22 -22 44 44"><path d="M2,-16.5 L-13,3 L-1,3 L-3.5,17 L12.5,-3 L0.5,-3 Z" fill="#c5c7ca" stroke="#c5c7ca" stroke-width="1" stroke-linejoin="round"/></svg>
<svg class="b" style="left:200.5px;top:963.5px;z-index:6" width="44" height="44" viewBox="-22 -22 44 44"><polygon points="-10.50,1.30 -18.55,-3.35 -18.55,-12.65 -10.50,-17.30 -2.45,-12.65 -2.45,-3.35" fill="#c5c7ca"/><polygon points="9.50,-0.40 2.92,-4.20 2.92,-11.80 9.50,-15.60 16.08,-11.80 16.08,-4.20" fill="none" stroke="#c5c7ca" stroke-width="2.3"/><polygon points="0.00,18.80 -8.05,14.15 -8.05,4.85 -0.00,0.20 8.05,4.85 8.05,14.15" fill="#c5c7ca"/></svg>
<svg class="b" style="left:200px;top:1022px;z-index:6" width="45" height="45" viewBox="0 0 1308 1308" preserveAspectRatio="none"><g fill="none" stroke="#c5c7ca" stroke-width="88"><path d="M385,962 L330,962 C200,962 130,862 130,760 C130,640 220,560 345,545 C350,365 465,248 600,248 C740,248 832,345 860,490 C1000,510 1118,625 1118,790 C1118,900 1040,962 950,962 L800,962"/><path d="M600,455 L600,575 M705,690 C690,615 530,600 505,680 C480,765 600,795 675,840 C760,895 675,985 570,955 C515,940 488,905 475,880 M600,955 L600,1112"/></g></svg>
<svg class="b" style="left:200.5px;top:1082.0px;z-index:6" width="44" height="44" viewBox="-22 -22 44 44"><g fill="#c5c7ca"><rect x="-18" y="-15.5" width="36" height="5"/><rect x="-18" y="-6.5" width="7" height="5"/><rect x="-7" y="-6.5" width="25" height="5"/><rect x="-7" y="2.5" width="14" height="5"/><rect x="11" y="2.5" width="7" height="5"/><rect x="-0.5" y="11" width="7" height="5"/></g></svg>
<svg class="b" style="left:200.5px;top:1141.5px;z-index:6" width="44" height="44" viewBox="-22 -22 44 44"><g fill="none" stroke="#c5c7ca" stroke-width="2.5"><path d="M-7,-11.5 L-7,-15 L15,-15 L15,4 L6,4"/><path d="M-12.5,-3 L-12.5,-7 L2,-7 L2,12 L-2,12"/><rect x="-16.5" y="-2" width="8" height="14"/></g></svg>
<svg class="b" style="left:200px;top:1200px;z-index:6" width="45" height="45" viewBox="0 0 1308 1308" preserveAspectRatio="none"><path d="M645,548 L645,460 C645,330 540,245 410,245 C280,245 200,340 200,462 C200,590 300,690 420,690 L880,690 C1000,690 1085,790 1085,902 C1085,1030 980,1120 860,1120 C740,1120 650,1040 650,948" fill="none" stroke="#c5c7ca" stroke-width="90"/><path d="M498,948 L642,815 L785,948 Z" fill="#c5c7ca"/></svg>
<svg class="b" style="left:200px;top:1260px;z-index:6" width="45" height="45" viewBox="0 0 1308 1308" preserveAspectRatio="none"><g fill="none" stroke="#c5c7ca" stroke-width="85" stroke-linejoin="round"><path d="M640,195 L1000,385 L1000,700 C1000,900 850,1050 645,1118 C430,1050 285,900 285,700 L285,385 Z"/><path d="M652,240 L652,1080 M350,460 L645,560 M315,680 L645,820"/></g></svg>
<svg class="b" style="left:200px;top:1320px;z-index:6" width="45" height="45" viewBox="0 0 1308 1308" preserveAspectRatio="none"><path d="M632,268 A392,392 0 1 0 1032,650" fill="none" stroke="#c5c7ca" stroke-width="95"/><path fill="#c5c7ca" d="M860,230 Q916.0,377.6 1060,435 Q916.0,492.4 860,640 Q804.0,492.4 660,435 Q804.0,377.6 860,230 Z M620,552 Q655.0,645.6 745,682 Q655.0,718.4 620,812 Q585.0,718.4 495,682 Q585.0,645.6 620,552 Z"/></svg>
<svg class="b" style="left:200.0px;top:1401.5px;z-index:6" width="44" height="44" viewBox="-22 -22 44 44"><g fill="none" stroke="#c5c7ca" stroke-width="2.4"><path d="M-8,-4 C-9,-13 9,-13 8,-4 L8,6 C8,12 4,15 0,15 C-4,15 -8,12 -8,6 Z"/><path d="M0,-2 L0,15 M-7,-9 L0,-2 L7,-9"/><path d="M-17,0 L-8,0 M8,0 L17,0 M-15,-15 L-7,-7 M15,-15 L7,-7 M-15,15 L-7,8 M15,15 L7,8 M-4,-12 L-4,-16 M4,-12 L4,-16"/></g></svg>
<svg class="b" style="left:200px;top:1462px;z-index:6" width="45" height="45" viewBox="0 0 1308 1308" preserveAspectRatio="none"><path d="M235,1035 A490,490 0 0 1 705,300" fill="none" stroke="#c5c7ca" stroke-width="108" stroke-dasharray="128 62"/><path fill="#c5c7ca" d="M955,250 L770,790 C735,865 600,880 548,800 C505,730 545,680 595,635 Z M990,540 C1040,470 1100,470 1130,540 C1180,700 1170,900 1100,1030 C1050,1100 950,1060 980,980 C1030,850 1030,700 990,560 Z"/></svg>
<svg class="b" style="left:200.0px;top:1521.0px;z-index:6" width="44" height="44" viewBox="-22 -22 44 44"><g fill="#c5c7ca"><rect x="-17" y="-18" width="6" height="4"/><rect x="-7" y="-18" width="7" height="4"/><rect x="4" y="-18" width="6" height="4"/><rect x="-17" y="-8" width="7" height="4"/><rect x="-17" y="2" width="7" height="4"/></g><g fill="none" stroke="#c5c7ca" stroke-width="3"><circle cx="5" cy="0" r="10"/><path d="M-2,8 L-12,17.5"/></g><path d="M1,2 L1,-4 A5,5 0 0 1 9,0 L9,2 Z" fill="#c5c7ca"/></svg>
<svg class="b" style="left:200px;top:1727px;z-index:6" width="45" height="45" viewBox="0 0 1308 1308" preserveAspectRatio="none"><path fill="#c5c7ca" d="M120,500 C250,520 350,510 420,480 C440,460 430,430 410,400 C370,340 380,210 490,200 C600,200 610,330 570,400 C550,440 550,480 580,500 C700,520 800,490 890,460 L860,740 C880,770 920,780 960,750 C1030,700 1160,730 1160,820 C1160,920 1060,950 990,910 C940,880 900,880 870,900 L870,1090 C760,1090 650,1100 550,1100 C520,1060 540,1020 560,990 C620,900 590,800 480,790 C370,790 350,900 410,990 C430,1020 440,1070 400,1100 C300,1110 200,1110 120,1090 Z"/></svg>
<svg class="b" style="left:200.0px;top:1784.0px;z-index:6" width="44" height="44" viewBox="-22 -22 44 44"><path d="M4,-13.5 Q5.5,-2.5 15.5,-1 Q5.5,0.5 4,11 Q2.5,0.5 -7.5,-1 Q2.5,-2.5 4,-13.5 Z M-8.5,3.5 Q-7.5,9.5 -2,10.5 Q-7.5,11.5 -8.5,17.5 Q-9.5,11.5 -15,10.5 Q-9.5,9.5 -8.5,3.5 Z" fill="#c5c7ca"/></svg>
<svg class="b" style="left:199px;top:1856px;z-index:6" width="46" height="46" viewBox="199 1856 46 46"><circle cx="222.2" cy="1879.2" r="22.8" fill="#500a56"/><path fill="#a8f04e" d="M217.3,1860.3 H225.6 V1865.2 H217.3 Z M212.6,1869.6 H217.3 V1874.9 H225.6 V1869.6 H230.5 V1879.3 H240.2 V1892.4 H230.5 V1887.7 H225.6 V1882.8 H217.3 V1887.7 H212.6 V1892.4 H202.9 V1879.3 H212.6 Z"/></svg>
<span class="t" style="left:383.00px;top:275.10px;font-size:43px;font-weight:400;color:#1c2b36;transform:scaleX(1.0000);">Internal Developer Portal</span>
<span class="t" style="left:948.71px;top:277.87px;font-size:35px;font-weight:400;color:#1c2b36;transform:scaleX(1.0191);">Overview</span>
<span class="t" style="left:1205.95px;top:277.87px;font-size:35px;font-weight:400;color:#5f6b76;transform:scaleX(1.0265);">Software Catalog</span>
<span class="t" style="left:1588.03px;top:278.07px;font-size:35px;font-weight:400;color:#5f6b76;transform:scaleX(0.9868);">Scorecards</span>
<span class="t" style="left:1780.90px;top:282.99px;font-size:26px;font-weight:700;color:#a33cf2;transform:scaleX(0.9008);">PREVIEW</span>
<span class="t" style="left:1997.01px;top:278.07px;font-size:35px;font-weight:400;color:#5f6b76;transform:scaleX(0.9935);">Self-Service Actions</span>
<span class="t" style="left:2324.11px;top:282.99px;font-size:26px;font-weight:700;color:#a33cf2;transform:scaleX(0.9441);">NEW</span>
<span class="t" style="left:3481.58px;top:280.16px;font-size:31px;font-weight:400;color:#1c2b36;transform:scaleX(1.0092);">Manage</span>
<span class="t" style="left:336.11px;top:389.05px;font-size:28px;font-weight:400;color:#68737d;transform:scaleX(0.8926);">OVERVIEW</span>
<span class="t" style="left:430.42px;top:454.18px;font-size:30.5px;font-weight:400;color:#1c2b36;transform:scaleX(1.0417);">Home</span>
<span class="t" style="left:533.53px;top:457.99px;font-size:26px;font-weight:700;color:#a33cf2;transform:scaleX(0.9654);">COMING SOON</span>
<span class="t" style="left:335.23px;top:530.72px;font-size:27.5px;font-weight:400;color:#68737d;transform:scaleX(0.8837);">REPORTS</span>
<span class="t" style="left:470.71px;top:531.99px;font-size:26px;font-weight:700;color:#a33cf2;transform:scaleX(0.8941);">PREVIEW</span>
<span class="t" style="left:430.47px;top:595.18px;font-size:30.5px;font-weight:400;color:#ffffff;transform:scaleX(1.0133);">Reliability Overview</span>
<span class="t" style="left:391.05px;top:692.28px;font-size:29.5px;font-weight:400;color:#1c2b36;transform:scaleX(0.9476);">SLO Performance</span>
<span class="t" style="left:389.02px;top:769.03px;font-size:29.5px;font-weight:400;color:#1c2b36;transform:scaleX(0.9937);">Incident Trends</span>
<span class="t" style="left:430.96px;top:863.53px;font-size:29.5px;font-weight:400;color:#1c2b36;transform:scaleX(1.0394);">Scorecards Performance</span>
<span class="t" style="left:967.99px;top:401.01px;font-size:31px;font-weight:400;color:#1c2b36;transform:scaleX(1.0069);">Filter by</span>
<span class="t" style="left:1175.02px;top:400.26px;font-size:31px;font-weight:400;color:#1c2b36;transform:scaleX(0.9909);">My Teams</span>
<span class="t" style="left:1599.00px;top:366.49px;font-size:26px;font-weight:400;color:#68737d;transform:scaleX(1.0071);">teams</span>
<span class="t" style="left:1748.51px;top:366.49px;font-size:26px;font-weight:400;color:#68737d;transform:scaleX(0.9919);">services</span>
<span class="t" style="left:1749.00px;top:400.26px;font-size:31px;font-weight:400;color:#0b62c4;transform:scaleX(1.0013);">checkout, api-layer, shopist, product-reco...</span>
<span class="t" style="left:983.44px;top:447.99px;font-size:26px;font-weight:400;color:#68737d;transform:scaleX(1.0296);">incident-severity</span>
<span class="t" style="left:1254.91px;top:447.99px;font-size:26px;font-weight:400;color:#68737d;transform:scaleX(1.0428);">incident-state</span>
<span class="t" style="left:1479.26px;top:481.76px;font-size:31px;font-weight:400;color:#1c2b36;transform:scaleX(0.9946);">Roll up</span>
<span class="t" style="left:1611.25px;top:481.76px;font-size:31px;font-weight:400;color:#1c2b36;transform:scaleX(0.9653);">Weekly</span>
<span class="t" style="left:1803.50px;top:481.76px;font-size:31px;font-weight:400;color:#1c2b36;transform:scaleX(1.0020);">Group by</span>
<span class="t" style="left:1970.25px;top:481.76px;font-size:31px;font-weight:400;color:#1c2b36;transform:scaleX(1.0034);">Team</span>
<span class="t" style="left:2091.82px;top:481.76px;font-size:31px;font-weight:400;color:#0a55c0;transform:scaleX(0.9675);">Service</span>
<span class="t" style="left:2861.89px;top:370.18px;font-size:24px;font-weight:400;color:#68737d;transform:scaleX(0.9283);">UTC-05:00</span>
<span class="t" style="left:2760.96px;top:400.26px;font-size:31px;font-weight:400;color:#68737d;transform:scaleX(1.0431);">3mo</span>
<span class="t" style="left:2860.01px;top:400.26px;font-size:31px;font-weight:400;color:#1c2b36;transform:scaleX(0.9962);">Past 3 Months</span>
<span class="t" style="left:994.03px;top:595.61px;font-size:30px;font-weight:700;color:#1c2b36;transform:scaleX(0.9709);">SLO Summary</span>
<span class="t" style="left:1196.13px;top:708.31px;font-size:30px;font-weight:700;color:#ffffff;transform:scaleX(0.8738);">SCORE</span>
<span class="t" style="left:1137.75px;top:761.88px;font-size:110px;font-weight:700;color:#ffffff;transform:scaleX(0.9694);">79.5</span>
<span class="t" style="left:1656.69px;top:708.21px;font-size:30px;font-weight:700;color:#68737d;transform:scaleX(0.9030);">BREACHED</span>
<span class="t" style="left:1702.95px;top:762.09px;font-size:110px;font-weight:700;color:#1f2b35;transform:scaleX(1.0132);">2</span>
<span class="t" style="left:2121.00px;top:708.21px;font-size:30px;font-weight:700;color:#68737d;transform:scaleX(0.9778);">WARN</span>
<span class="t" style="left:2135.68px;top:762.09px;font-size:110px;font-weight:700;color:#1f2b35;transform:scaleX(1.0056);">3</span>
<span class="t" style="left:2529.45px;top:708.21px;font-size:30px;font-weight:700;color:#68737d;transform:scaleX(0.9488);">OK</span>
<span class="t" style="left:2521.43px;top:762.09px;font-size:110px;font-weight:700;color:#1f2b35;transform:scaleX(0.9907);">3</span>
<span class="t" style="left:2890.34px;top:708.21px;font-size:30px;font-weight:700;color:#68737d;transform:scaleX(0.9775);">NO DATA</span>
<span class="t" style="left:2923.71px;top:762.09px;font-size:110px;font-weight:700;color:#1f2b35;transform:scaleX(1.0226);">0</span>
<span class="t" style="left:3332.00px;top:708.21px;font-size:30px;font-weight:700;color:#68737d;transform:scaleX(0.9072);">TOTAL</span>
<span class="t" style="left:3347.51px;top:762.09px;font-size:110px;font-weight:700;color:#1f2b35;transform:scaleX(0.9618);">8</span>
<span class="t" style="left:993.52px;top:981.36px;font-size:30px;font-weight:700;color:#1c2b36;transform:scaleX(0.9797);">SLO Summary Grouped by service</span>
<span class="t" style="left:991.56px;top:1048.05px;font-size:28px;font-weight:700;color:#1c2b36;transform:scaleX(0.9356);">GROUP</span>
<span class="t" style="left:1868.13px;top:1048.80px;font-size:28px;font-weight:700;color:#1c2b36;transform:scaleX(0.8673);">SCORE</span>
<span class="t" style="left:2061.72px;top:1048.80px;font-size:28px;font-weight:700;color:#1c2b36;transform:scaleX(0.8894);">BREACHED</span>
<span class="t" style="left:2367.50px;top:1048.80px;font-size:28px;font-weight:700;color:#1c2b36;transform:scaleX(0.9911);">WARN</span>
<span class="t" style="left:2660.03px;top:1048.80px;font-size:28px;font-weight:700;color:#1c2b36;transform:scaleX(0.9695);">OK</span>
<span class="t" style="left:2831.07px;top:1048.80px;font-size:28px;font-weight:700;color:#1c2b36;transform:scaleX(0.9628);">NO DATA</span>
<span class="t" style="left:3116.25px;top:1048.80px;font-size:28px;font-weight:700;color:#1c2b36;transform:scaleX(0.9028);">TOTAL</span>
<span class="t" style="left:3311.89px;top:1048.80px;font-size:28px;font-weight:700;color:#1c2b36;transform:scaleX(0.9284);">BREAKDOWN</span>
<span class="t" style="left:1050.52px;top:1121.18px;font-size:30.5px;font-weight:700;color:#1c2b36;transform:scaleX(0.9812);">checkout</span>
<span class="t" style="left:1050.51px;top:1205.18px;font-size:30.5px;font-weight:700;color:#1c2b36;transform:scaleX(0.9879);">api-layer</span>
<span class="t" style="left:1050.53px;top:1289.18px;font-size:30.5px;font-weight:700;color:#1c2b36;transform:scaleX(0.9673);">shopist</span>
<span class="t" style="left:1049.48px;top:1373.18px;font-size:30.5px;font-weight:700;color:#1c2b36;transform:scaleX(1.0102);">product-recommendation</span>
<span class="t" style="left:1051.50px;top:1457.18px;font-size:30.5px;font-weight:700;color:#1c2b36;transform:scaleX(1.0130);">trade-validator</span>
<span class="t" style="left:1051.50px;top:1541.18px;font-size:30.5px;font-weight:700;color:#1c2b36;transform:scaleX(0.9950);">trade-receiver</span>
<span class="t" style="left:1051.50px;top:1625.18px;font-size:30.5px;font-weight:700;color:#1c2b36;transform:scaleX(1.0168);">trade-confirmation</span>
<span class="t" style="left:1050.53px;top:1709.18px;font-size:30.5px;font-weight:700;color:#1c2b36;transform:scaleX(0.9732);">sr-prod-site</span>
<span class="tr" style="right:1845.50px;top:1122.93px;font-size:30.8px;font-weight:700;color:#ffffff">100</span>
<span class="tr" style="right:1597.75px;top:1122.93px;font-size:30.8px;font-weight:400;color:#1c2b36">0</span>
<span class="tr" style="right:1349.25px;top:1122.93px;font-size:30.8px;font-weight:400;color:#1c2b36">0</span>
<span class="tr" style="right:1099.25px;top:1122.93px;font-size:30.8px;font-weight:700;color:#2a8a3e">1</span>
<span class="tr" style="right:851.25px;top:1122.93px;font-size:30.8px;font-weight:400;color:#1c2b36">0</span>
<span class="tr" style="right:604.50px;top:1122.93px;font-size:30.8px;font-weight:400;color:#1c2b36">1</span>
<span class="tr" style="right:1845.50px;top:1206.93px;font-size:30.8px;font-weight:700;color:#ffffff">100</span>
<span class="tr" style="right:1597.75px;top:1206.93px;font-size:30.8px;font-weight:400;color:#1c2b36">0</span>
<span class="tr" style="right:1349.25px;top:1206.93px;font-size:30.8px;font-weight:400;color:#1c2b36">0</span>
<span class="tr" style="right:1099.25px;top:1206.93px;font-size:30.8px;font-weight:700;color:#2a8a3e">1</span>
<span class="tr" style="right:851.25px;top:1206.93px;font-size:30.8px;font-weight:400;color:#1c2b36">0</span>
<span class="tr" style="right:604.50px;top:1206.93px;font-size:30.8px;font-weight:400;color:#1c2b36">1</span>
<span class="tr" style="right:1845.50px;top:1290.93px;font-size:30.8px;font-weight:700;color:#ffffff">73.6</span>
<span class="tr" style="right:1597.75px;top:1290.93px;font-size:30.8px;font-weight:400;color:#1c2b36">0</span>
<span class="tr" style="right:1349.25px;top:1290.93px;font-size:30.8px;font-weight:700;color:#c8580a">1</span>
<span class="tr" style="right:1099.25px;top:1290.93px;font-size:30.8px;font-weight:400;color:#1c2b36">0</span>
<span class="tr" style="right:851.25px;top:1290.93px;font-size:30.8px;font-weight:400;color:#1c2b36">0</span>
<span class="tr" style="right:604.50px;top:1290.93px;font-size:30.8px;font-weight:400;color:#1c2b36">1</span>
<span class="tr" style="right:1845.50px;top:1374.93px;font-size:30.8px;font-weight:700;color:#ffffff">68.2</span>
<span class="tr" style="right:1597.75px;top:1374.93px;font-size:30.8px;font-weight:400;color:#1c2b36">0</span>
<span class="tr" style="right:1349.25px;top:1374.93px;font-size:30.8px;font-weight:700;color:#c8580a">2</span>
<span class="tr" style="right:1099.25px;top:1374.93px;font-size:30.8px;font-weight:400;color:#1c2b36">0</span>
<span class="tr" style="right:851.25px;top:1374.93px;font-size:30.8px;font-weight:400;color:#1c2b36">0</span>
<span class="tr" style="right:604.50px;top:1374.93px;font-size:30.8px;font-weight:400;color:#1c2b36">2</span>
<span class="tr" style="right:1845.50px;top:1458.93px;font-size:30.8px;font-weight:700;color:#ffffff">66.9</span>
<span class="tr" style="right:1597.75px;top:1458.93px;font-size:30.8px;font-weight:400;color:#1c2b36">0</span>
<span class="tr" style="right:1349.25px;top:1458.93px;font-size:30.8px;font-weight:400;color:#1c2b36">0</span>
<span class="tr" style="right:1099.25px;top:1458.93px;font-size:30.8px;font-weight:700;color:#2a8a3e">1</span>
<span class="tr" style="right:851.25px;top:1458.93px;font-size:30.8px;font-weight:400;color:#1c2b36">0</span>
<span class="tr" style="right:604.50px;top:1458.93px;font-size:30.8px;font-weight:400;color:#1c2b36">1</span>
<span class="tr" style="right:1845.50px;top:1542.93px;font-size:30.8px;font-weight:700;color:#ffffff">66.9</span>
<span class="tr" style="right:1597.75px;top:1542.93px;font-size:30.8px;font-weight:400;color:#1c2b36">0</span>
<span class="tr" style="right:1349.25px;top:1542.93px;font-size:30.8px;font-weight:400;color:#1c2b36">0</span>
<span class="tr" style="right:1099.25px;top:1542.93px;font-size:30.8px;font-weight:700;color:#2a8a3e">1</span>
<span class="tr" style="right:851.25px;top:1542.93px;font-size:30.8px;font-weight:400;color:#1c2b36">0</span>
<span class="tr" style="right:604.50px;top:1542.93px;font-size:30.8px;font-weight:400;color:#1c2b36">1</span>
<span class="tr" style="right:1845.50px;top:1626.93px;font-size:30.8px;font-weight:700;color:#ffffff">66.9</span>
<span class="tr" style="right:1597.75px;top:1626.93px;font-size:30.8px;font-weight:400;color:#1c2b36">0</span>
<span class="tr" style="right:1349.25px;top:1626.93px;font-size:30.8px;font-weight:400;color:#1c2b36">0</span>
<span class="tr" style="right:1099.25px;top:1626.93px;font-size:30.8px;font-weight:700;color:#2a8a3e">1</span>
<span class="tr" style="right:851.25px;top:1626.93px;font-size:30.8px;font-weight:400;color:#1c2b36">0</span>
<span class="tr" style="right:604.50px;top:1626.93px;font-size:30.8px;font-weight:400;color:#1c2b36">1</span>
<span class="tr" style="right:1845.50px;top:1710.93px;font-size:30.8px;font-weight:400;color:#ffffff">N/A</span>
<span class="tr" style="right:1597.75px;top:1710.93px;font-size:30.8px;font-weight:400;color:#1c2b36">0</span>
<span class="tr" style="right:1349.25px;top:1710.93px;font-size:30.8px;font-weight:400;color:#1c2b36">0</span>
<span class="tr" style="right:1099.25px;top:1710.93px;font-size:30.8px;font-weight:400;color:#1c2b36">0</span>
<span class="tr" style="right:851.25px;top:1710.93px;font-size:30.8px;font-weight:700;color:#5f6b76">2</span>
<span class="tr" style="right:604.50px;top:1710.93px;font-size:30.8px;font-weight:400;color:#1c2b36">2</span>
</body></html>
